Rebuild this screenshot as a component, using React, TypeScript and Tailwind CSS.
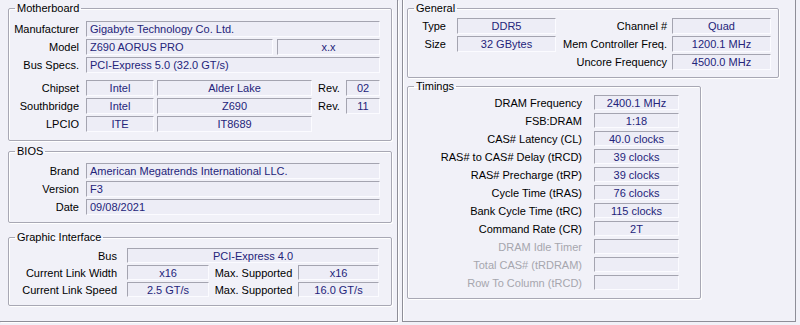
import React from "react";

const FONT = "font-['Liberation_Sans',Arial,sans-serif]";

type FieldProps = {
  w?: string;
  h?: string;
  center?: boolean;
  children?: React.ReactNode;
};

function Field({ w = "flex-1", h = "h-[16px]", center = true, children }: FieldProps) {
  return (
    <div
      className={`${w} ${h} shrink-0 border border-t-[#a4a4b0] border-l-[#a4a4b0] border-b-[#fbfbff] border-r-[#fbfbff] bg-[#ededf6] text-[#24247a] text-[11px] leading-[14px] whitespace-nowrap overflow-hidden ${
        center ? "text-center" : "text-left pl-[3px]"
      }`}
    >
      {children}
    </div>
  );
}

function Group({
  title,
  className,
  children,
}: {
  title: string;
  className: string;
  children: React.ReactNode;
}) {
  return (
    <fieldset
      className={`border border-[#a8a8b4] rounded-[2px] shadow-[1px_1px_0_#ffffff,inset_1px_1px_0_#ffffff] ${className}`}
    >
      <legend className="ml-[6px] px-[2px] text-[11px] leading-[13px] text-black">{title}</legend>
      {children}
    </fieldset>
  );
}

function Label({ w, children, dim }: { w: string; children: React.ReactNode; dim?: boolean }) {
  return (
    <div
      className={`${w} shrink-0 text-right text-[11px] leading-[14px] whitespace-nowrap ${
        dim ? "text-[#a6a6ae]" : "text-black"
      }`}
    >
      {children}
    </div>
  );
}

const timings: { label: string; value: string; dim?: boolean }[] = [
  { label: "DRAM Frequency", value: "2400.1 MHz" },
  { label: "FSB:DRAM", value: "1:18" },
  { label: "CAS# Latency (CL)", value: "40.0 clocks" },
  { label: "RAS# to CAS# Delay (tRCD)", value: "39 clocks" },
  { label: "RAS# Precharge (tRP)", value: "39 clocks" },
  { label: "Cycle Time (tRAS)", value: "76 clocks" },
  { label: "Bank Cycle Time (tRC)", value: "115 clocks" },
  { label: "Command Rate (CR)", value: "2T" },
  { label: "DRAM Idle Timer", value: "", dim: true },
  { label: "Total CAS# (tRDRAM)", value: "", dim: true },
  { label: "Row To Column (tRCD)", value: "", dim: true },
];

export default function App() {
  return (
    <div className={`w-[800px] h-[325px] bg-[#f1f1f8] flex overflow-hidden ${FONT}`}>
      {/* Mainboard tab */}
      <div className="w-[398px] h-[322px] shrink-0 border-r border-b border-[#8e8e98] shadow-[1px_1px_0_#ffffff] pt-[2px] pl-[8px] pr-[5px]">
        <Group title="Motherboard" className="pt-[6px] pb-[8px] pr-[11px]">
          <div className="flex flex-col gap-[2px]">
            <div className="flex items-center">
              <Label w="w-[70px]">Manufacturer</Label>
              <div className="w-[7px]" />
              <Field center={false}>Gigabyte Technology Co. Ltd.</Field>
            </div>
            <div className="flex items-center">
              <Label w="w-[70px]">Model</Label>
              <div className="w-[7px]" />
              <Field w="w-[187px]" center={false}>Z690 AORUS PRO</Field>
              <div className="w-[4px]" />
              <Field>x.x</Field>
            </div>
            <div className="flex items-center">
              <Label w="w-[70px]">Bus Specs.</Label>
              <div className="w-[7px]" />
              <Field center={false}>PCI-Express 5.0 (32.0 GT/s)</Field>
            </div>
          </div>
          <div className="flex flex-col gap-[2px] mt-[7px]">
            {[
              ["Chipset", "Intel", "Alder Lake", "02"],
              ["Southbridge", "Intel", "Z690", "11"],
              ["LPCIO", "ITE", "IT8689", ""],
            ].map(([l, a, b, rev]) => (
              <div key={l} className="flex items-center">
                <Label w="w-[70px]">{l}</Label>
                <div className="w-[7px]" />
                <Field w="w-[68px]">{a}</Field>
                <div className="w-[3px]" />
                <Field w="w-[155px]">{b}</Field>
                {rev && (
                  <>
                    <div className="w-[34px] text-center text-[11px] leading-[14px]">Rev.</div>
                    <Field>{rev}</Field>
                  </>
                )}
              </div>
            ))}
          </div>
        </Group>

        <Group title="BIOS" className="mt-[4px] pt-[5px] pb-[7px] pr-[11px]">
          <div className="flex flex-col gap-[2px]">
            {[
              ["Brand", "American Megatrends International LLC."],
              ["Version", "F3"],
              ["Date", "09/08/2021"],
            ].map(([l, v]) => (
              <div key={l} className="flex items-center">
                <Label w="w-[70px]">{l}</Label>
                <div className="w-[7px]" />
                <Field center={false}>{v}</Field>
              </div>
            ))}
          </div>
        </Group>

        <Group title="Graphic Interface" className="mt-[8px] pt-[4px] pb-[8px] pr-[12px]">
          <div className="flex flex-col gap-[2px]">
            <div className="flex items-center">
              <Label w="w-[108px]">Bus</Label>
              <div className="w-[10px]" />
              <Field h="h-[15px]">PCI-Express 4.0</Field>
            </div>
            {[
              ["Current Link Width", "x16", "x16"],
              ["Current Link Speed", "2.5 GT/s", "16.0 GT/s"],
            ].map(([l, a, b]) => (
              <div key={l} className="flex items-center">
                <Label w="w-[108px]">{l}</Label>
                <div className="w-[10px]" />
                <Field w="w-[82px]" h="h-[15px]">{a}</Field>
                <div className="w-[89px] text-center text-[11px] leading-[14px]">Max. Supported</div>
                <Field h="h-[15px]">{b}</Field>
              </div>
            ))}
          </div>
        </Group>
      </div>

      <div className="w-[4px] shrink-0" />

      {/* Memory tab */}
      <div className="w-[394px] h-[322px] shrink-0 border-l border-r border-b border-[#8e8e98] shadow-[inset_1px_0_0_#ffffff] pt-[2px] pl-[4px]">
        <Group title="General" className="w-[372px] pt-[3px] pb-[7px]">
          <div className="flex">
            <div className="flex flex-col gap-[2px]">
              <div className="flex items-center">
                <Label w="w-[38px]">Type</Label>
                <div className="w-[11px]" />
                <Field w="w-[99px]">DDR5</Field>
              </div>
              <div className="flex items-center">
                <Label w="w-[38px]">Size</Label>
                <div className="w-[11px]" />
                <Field w="w-[99px]">32 GBytes</Field>
              </div>
            </div>
            <div className="flex flex-col gap-[2px]">
              {[
                ["Channel #", "Quad"],
                ["Mem Controller Freq.", "1200.1 MHz"],
                ["Uncore Frequency", "4500.0 MHz"],
              ].map(([l, v]) => (
                <div key={l} className="flex items-center">
                  <Label w="w-[111px]">{l}</Label>
                  <div className="w-[5px]" />
                  <Field w="w-[99px]">{v}</Field>
                </div>
              ))}
            </div>
          </div>
        </Group>

        <Group title="Timings" className="w-[294px] mt-[2px] pt-[2px] pb-[8px]">
          <div className="flex flex-col gap-[3px]">
            {timings.map((t) => (
              <div key={t.label} className="flex items-center">
                <Label w="w-[174px]" dim={t.dim}>
                  {t.label}
                </Label>
                <div className="w-[12px]" />
                <Field w="w-[85px]" h="h-[15px]">{t.value}</Field>
              </div>
            ))}
          </div>
        </Group>
      </div>
    </div>
  );
}
